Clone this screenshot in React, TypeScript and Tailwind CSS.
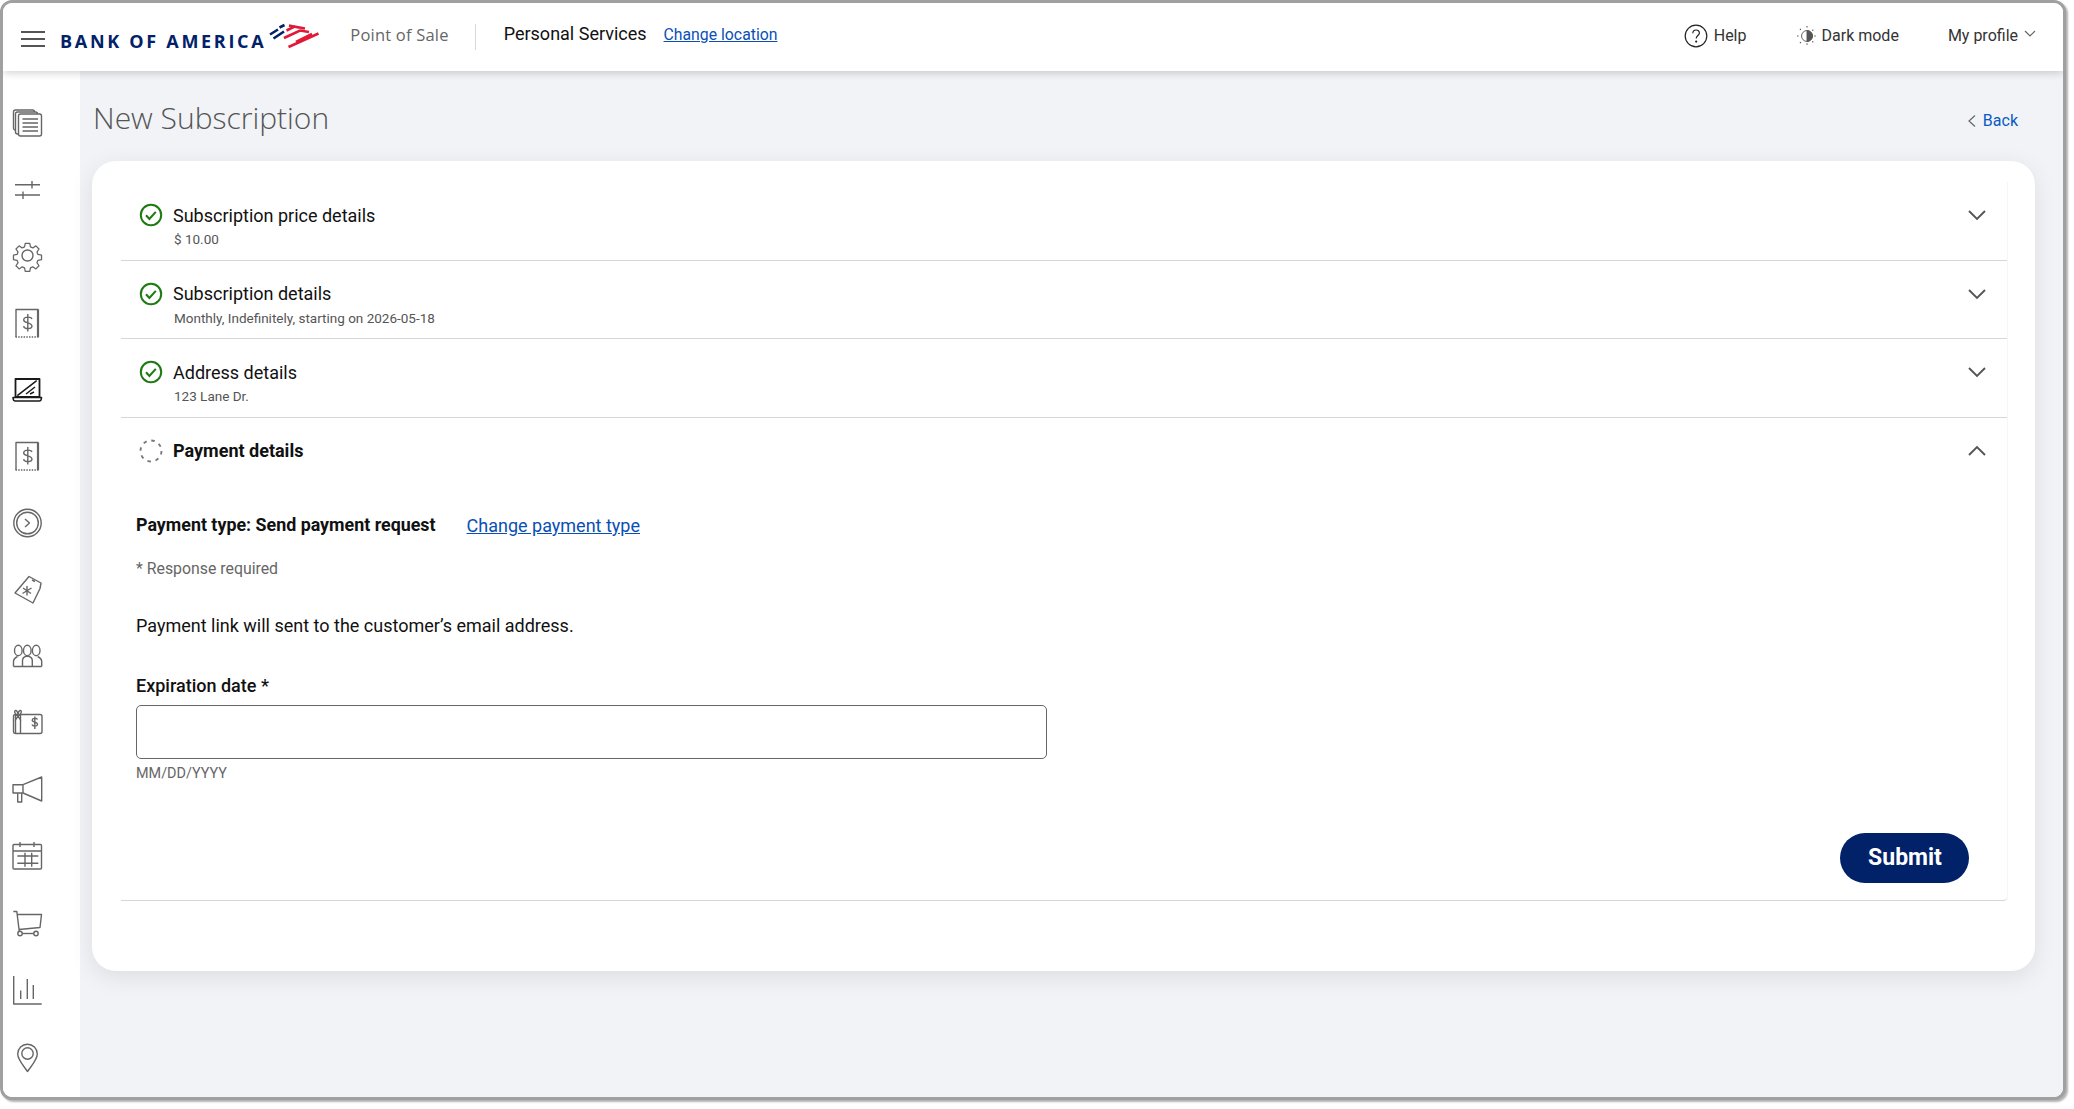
import React from "react";

const Ic = ({ children, active }: { children: React.ReactNode; active?: boolean }) => (
  <div className="h-[66.7px] flex items-center pl-[9px]">
    <svg width="32" height="32" viewBox="0 0 32 32" fill="none" stroke={active ? "#1a1a1a" : "#666"} strokeWidth="1.4" strokeLinejoin="round">
      {children}
    </svg>
  </div>
);

const Check = () => (
  <svg width="24" height="24" viewBox="0 0 24 24" fill="none" className="shrink-0">
    <circle cx="12" cy="12" r="10.2" stroke="#1f7a12" strokeWidth="2" />
    <path d="M7 12.3l3.400 3.600 6.400-7" stroke="#1f7a12" strokeWidth="2.100" />
  </svg>
);

const Chevron = ({ up }: { up?: boolean }) => (
  <svg width="18" height="11" viewBox="0 0 18 11" fill="none" className="shrink-0">
    <path d={up ? "M1 10L9 2l8 8" : "M1 1l8 8 8-8"} stroke="#555" strokeWidth="1.900" />
  </svg>
);

const Row = ({ title, sub }: { title: string; sub: string }) => (
  <div className="h-[78.7px] border-b border-[#d6d6d6] pl-[18px] pr-[21px] pt-[21px] flex justify-between items-start">
    <div>
      <div className="flex items-center gap-[10px] h-[24px]">
        <Check />
        <span className="text-[18px] text-[#111]">{title}</span>
      </div>
      <div className="text-[13.5px] text-[#555] ml-[35px] mt-[3px] leading-[18px]">{sub}</div>
    </div>
    <div className="mt-[7px]"><Chevron /></div>
  </div>
);

const Receipt = () => (
  <>
    <path d="M4 30V2.500h22V30" />
    <path d="M26 2.500V30" strokeWidth="2.200" />
    <path d="M3.500 30h24" strokeWidth="1.600" strokeDasharray="1.500 1.200" />
    <path d="M20 12c-1-2.400-8-2.800-8.300.8-.3 3.700 8.600 2.400 8.300 6.500-.3 3.300-7.500 3-8.500 0M15.800 7v17.500" />
  </>
);

export default function App() {
  return (
    <div className="h-[1109px] bg-white pr-[8px] overflow-hidden" style={{ fontFamily: "Roboto, sans-serif" }}>
      <div className="h-[1100px] flex flex-col border-[3px] border-[#a0a0a0] rounded-[12px] bg-white shadow-[2px_2px_2px_rgba(0,0,0,0.3)] overflow-hidden">
        <header className="h-[68px] shrink-0 bg-white flex items-center justify-between pl-[18px] pr-[27px] shadow-[0_2px_8px_rgba(0,0,0,0.18)] relative z-10">
          <div className="flex items-center">
            <svg width="24" height="16" viewBox="0 0 24 16" className="shrink-0 mt-[4px]" stroke="#555" strokeWidth="2"><path d="M0 1h24M0 8h24M0 15h24" /></svg>
            <span className="ml-[15px] mt-[9px] text-[#012169] text-[18px] font-bold tracking-[2.700px] whitespace-nowrap" style={{ fontFamily: '"Open Sans", sans-serif' }}>BANK OF AMERICA</span>
            <svg width="60" height="36" viewBox="0 0 60 36" fill="none" className="-ml-[2px] mt-[2px]" strokeWidth="2.600">
              <path d="M6 14.500l8-5M9.500 18.500l10.500-7M15.500 7.500l5-2.500" stroke="#012169" />
              <path d="M25 5.500l9.500 2M22.500 10.500l8-4 10.500 2M20 18l16-7.500 9 1.500M24.500 27l30-13.500" stroke="#e31837" />
              <path d="M32 22l16-8" stroke="#e31837" />
            </svg>
            <span className="ml-[26px] -mt-[4px] text-[16.500px] text-[#666] tracking-[0.200px]" style={{ fontFamily: '"Open Sans", sans-serif' }}>Point of Sale</span>
            <div className="w-px h-[26px] bg-[#d9d9d9] ml-[26px]" />
            <span className="ml-[28px] text-[18px] text-[#111] -mt-[7px]">Personal Services</span>
            <a className="ml-[17px] text-[15.800px] text-[#0a4fb5] underline -mt-[5px]">Change location</a>
          </div>
          <div className="flex items-center text-[16px] text-[#333] -mt-[3px]">
            <svg width="24" height="24" viewBox="0 0 24 24" fill="none" stroke="#222" strokeWidth="1.200" className="mr-[6px]">
              <circle cx="12" cy="12" r="10.800" />
              <path d="M8.800 9.200c0-4.200 6.600-4.200 6.600-.2 0 2.600-3.200 2.600-3.200 5.600" />
              <circle cx="12.200" cy="17.600" r="0.500" fill="#222" />
            </svg>
            <span>Help</span>
            <svg width="20" height="20" viewBox="0 0 22 22" fill="none" stroke="#555" className="ml-[50px] mr-[5px]">
              <circle cx="11" cy="11" r="6" fill="#fff" />
              <path d="M11 5a6 6 0 010 12z" fill="#555" />
              <path strokeWidth="1.200" strokeDasharray="1.600 1.400" d="M11 0v3M11 19v3M0 11h3M19 11h3M3.200 3.200l2 2M16.800 16.800l2 2M3.200 18.800l2-2M16.800 5.200l2-2" />
            </svg>
            <span>Dark mode</span>
            <span className="ml-[49px]">My profile</span>
            <svg width="12" height="8" viewBox="0 0 12 8" fill="none" stroke="#666" strokeWidth="1.200" className="ml-[6px] mb-[3px]"><path d="M1 1l5 5 5-5" /></svg>
          </div>
        </header>
        <div className="flex-1 flex min-h-0">
          <aside className="w-[77px] shrink-0 bg-white pt-[18.600px] flex flex-col">
            <Ic>
              <rect x="1.500" y="3" width="21" height="20" rx="2" /><rect x="3.500" y="5" width="22" height="22" rx="2" fill="#fff" /><rect x="6.500" y="7" width="23" height="22" rx="2" fill="#fff" />
              <path d="M10.500 12h15.500M10.500 16h15.500M10.500 20h15.500M10.500 24h15.500" />
            </Ic>
            <Ic><path d="M3 10.700h25M3 21h25M20 7v7.500M11 17.500V25" /></Ic>
            <Ic>
              <circle cx="15.500" cy="15.500" r="5.500" />
              <path d="M13.500 2.500h5l.8 4 2.600 1.100 3.400-2.300 3.500 3.500-2.300 3.400 1.100 2.600 4 .8v5l-4 .8-1.100 2.600 2.300 3.400-3.500 3.500-3.400-2.300-2.600 1.100-.8 4h-5l-.8-4-2.600-1.100-3.400 2.300-3.500-3.500 2.300-3.400-1.100-2.600-4-.8v-5l4-.8 1.100-2.600-2.300-3.400 3.500-3.500 3.400 2.300 2.600-1.100z" transform="translate(1.100 1.100) scale(.9)" />
            </Ic>
            <Ic><Receipt /></Ic>
            <Ic active>
              <path d="M3.500 5h24v18h-24z" strokeWidth="1.800" />
              <path d="M1 23.500h28.500c0 2.200-1 3.500-2.500 3.500H3.500C2 27 1 25.700 1 23.500z" strokeWidth="1.500" />
              <path d="M5.300 21.700L24.700 6.700M14 20l9-7M18 20l4-2" strokeWidth="1.500" />
            </Ic>
            <Ic><Receipt /></Ic>
            <Ic>
              <circle cx="15.500" cy="16" r="13.700" /><circle cx="15.500" cy="16" r="10.800" />
              <path d="M13 12l4.500 4-4.500 4" />
            </Ic>
            <Ic>
              <path d="M17 2.500L29 9l-1 5.500L21 29 3 19z" />
              <path d="M20 6l3 1.500M15 12v9.500M11 14l8 5.500M19.500 14l-9 5.500" />
            </Ic>
            <Ic>
              <ellipse cx="6.300" cy="10.500" rx="3.800" ry="5.200" />
              <ellipse cx="15.300" cy="10.500" rx="3.800" ry="5.200" />
              <ellipse cx="24.200" cy="10.500" rx="3.800" ry="5.200" />
              <path d="M10.500 26.500v-6c0-2.500 2-4 4.800-4.500 2.800.5 5 2 5 4.500v6zM1.500 26.500v-5c0-2.500 2-4 4-5M1.500 26.500h9M29.700 26.500v-5c0-2.500-2-4-4-5M29.700 26.500h-9.400" />
            </Ic>
            <Ic>
              <rect x="1.500" y="7.500" width="28.500" height="19" rx="2" />
              <path d="M3.500 7.500v19M8.500 7.500v19M6 9C2 7 2 3 4 3.500 5.800 4 6 7 6 9zM6 9c4-2 4-6 2-5.500C6.200 4 6 7 6 9zM6 9l-3 5M6 9l3 5" />
              <path d="M25.500 12.500c-.6-1.500-5-1.800-5.300.5-.3 2.500 5.600 1.700 5.300 4.500-.3 2.300-4.800 2.100-5.500 0M22.800 9.500v12.500" />
            </Ic>
            <Ic>
              <path d="M1 10.700h10V19H1zM11 10.700L29.700 3v24L11 19zM5.700 19h4v9h-4z" />
            </Ic>
            <Ic>
              <rect x="1" y="3.500" width="28.500" height="24.500" rx="1" />
              <path d="M1 10h28.500M8 1v5M22 1v5M5.300 15h21M5.300 22.300h21M13 11.700v14M19.700 11.700v14" />
            </Ic>
            <Ic>
              <path d="M1.300 4.500h3.500l2.500 20M5 7.500h24.500L28 20.500l-21 2" />
              <circle cx="8" cy="26.500" r="2.200" /><circle cx="24" cy="26.500" r="2.200" />
              <path d="M10 26.500h12" />
            </Ic>
            <Ic>
              <path d="M1.700 2v28h28M8.700 25v-8.500M15.300 25V5M21.300 25V11" />
            </Ic>
            <Ic>
              <path d="M15.500 30.500C11 24 5.700 18.500 5.700 13a9.800 9.800 0 0119.600 0c0 5.500-5.300 11-9.800 17.500z" /><circle cx="15.500" cy="12.500" r="5.700" />
            </Ic>
          </aside>
          <main className="flex-1 bg-[#f1f3f7] pl-[12px] pr-[28px] min-w-0">
            <div className="flex justify-between items-center h-[90px] pl-[1px] pr-[17px]">
              <h1 className="text-[30px] text-[#555] font-light mt-[2px]" style={{ fontFamily: '"Open Sans", sans-serif' }}>New Subscription</h1>
              <div className="flex items-center text-[16px] text-[#0a5ac2] mt-[10px]">
                <svg width="10" height="14" viewBox="0 0 10 14" fill="none" stroke="#666" strokeWidth="1.200" className="mr-[6px]"><path d="M8 1.500L2 7l6 5.500" /></svg>
                Back
              </div>
            </div>
            <section className="h-[810px] bg-white rounded-[24px] shadow-[0_6px_24px_rgba(0,0,0,0.09)] pl-[29px] pr-[27px] pt-[21px]">
              <div className="border-r border-[#f5f5f5] rounded-br-[4px]">
                <Row title="Subscription price details" sub="$ 10.00" />
                <Row title="Subscription details" sub="Monthly, Indefinitely, starting on 2026-05-18" />
                <Row title="Address details" sub="123 Lane Dr." />
                <div className="h-[483px] border-b border-[#d6d6d6] rounded-br-[4px] pl-[15px] pr-[21px] pt-[20.500px]">
                  <div className="flex justify-between items-center h-[24px]">
                    <div className="flex items-center gap-[10px] pl-[3px]">
                      <svg width="24" height="24" viewBox="0 0 24 24" fill="none" className="shrink-0">
                        <circle cx="12" cy="12" r="10.500" stroke="#777" strokeWidth="1.800" strokeDasharray="3.500 4.740" />
                      </svg>
                      <span className="text-[18px] font-bold text-[#111]">Payment details</span>
                    </div>
                    <Chevron up />
                  </div>
                  <div className="flex items-center mt-[51px] h-[24px] text-[18px]">
                    <span className="font-bold text-[#111] text-[17.850px]">Payment type: Send payment request</span>
                    <a className="ml-[31px] text-[#0a4fb5] underline">Change payment type</a>
                  </div>
                  <div className="text-[15.850px] text-[#666] mt-[21.500px] leading-[20px]">* Response required</div>
                  <div className="text-[18px] text-[#111] mt-[33.500px] leading-[26px]">Payment link will sent to the customer’s email address.</div>
                  <div className="text-[18px] font-medium text-[#111] mt-[35px] leading-[24px]">Expiration date *</div>
                  <div className="w-[911px] h-[54px] border border-[#666] rounded-[5px] mt-[7px]" />
                  <div className="text-[14.400px] text-[#666] mt-[6px] leading-[18px]">MM/DD/YYYY</div>
                  <div className="flex justify-end pr-[17px] mt-[50px]">
                    <button className="w-[129px] h-[50px] rounded-full bg-[#012169] text-white text-[23px] font-bold pt-[1px] pl-[1px]">Submit</button>
                  </div>
                </div>
              </div>
            </section>
          </main>
        </div>
      </div>
    </div>
  );
}
